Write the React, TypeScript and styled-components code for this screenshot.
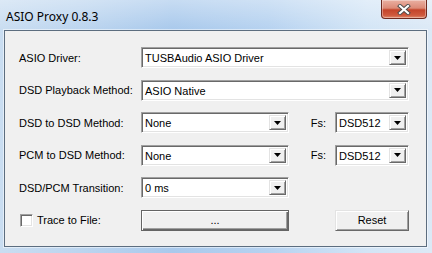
import React from "react";
import styled, { createGlobalStyle, css } from "styled-components";

const GlobalStyle = createGlobalStyle`
  html, body {
    margin: 0;
    padding: 0;
    background: #b9d3ee;
  }
  body {
    font-family: "Liberation Sans", Arial, sans-serif;
  }
`;

/* Classic Win32 3D edges */
const sunken = css`
  border: 1px solid;
  border-color: #a0a0a0 #ffffff #ffffff #a0a0a0;
  box-shadow: inset 1px 1px 0 #696969, inset -1px -1px 0 #e3e3e3;
`;

const raised = css`
  border: 1px solid;
  border-color: #e3e3e3 #696969 #696969 #e3e3e3;
  box-shadow: inset 1px 1px 0 #ffffff, inset -1px -1px 0 #a0a0a0;
`;

const Window = styled.div`
  width: 432px;
  height: 253px;
  box-sizing: border-box;
  display: flex;
  flex-direction: column;
  padding: 0 5px 6px 4px;
  overflow: hidden;
  background:
    linear-gradient(180deg, rgba(255, 255, 255, 0.35) 0, rgba(255, 255, 255, 0) 30px),
    linear-gradient(90deg, #c9ddf1 0%, #bcd5ef 18%, #a9c9ec 40%, #b6d2f0 62%, #d3e5f6 85%, #dce9f6 100%);
`;

const TitleBar = styled.div`
  height: 30px;
  display: flex;
  justify-content: space-between;
  align-items: flex-start;
`;

const Title = styled.div`
  padding: 8px 0 0 2px;
  font-family: "Segoe UI", "Noto Sans", sans-serif;
  font-size: 12px;
  color: #000;
`;

const CloseButton = styled.div`
  width: 46px;
  height: 19px;
  box-sizing: border-box;
  display: flex;
  align-items: center;
  justify-content: center;
  border: 1px solid #6e2a20;
  border-top: none;
  border-radius: 0 0 4px 4px;
  background: linear-gradient(180deg, #eab0a2 0%, #dc8a77 45%, #c4442a 55%, #cf5a3e 85%, #e08a6c 100%);
  box-shadow: inset 0 0 0 1px rgba(255, 255, 255, 0.35);
`;

const Client = styled.div`
  flex: 1;
  box-sizing: border-box;
  border: 1px solid #5c6d7f;
  box-shadow: 0 0 0 1px rgba(255, 255, 255, 0.5);
  background: #f0f0f0;
  padding: 16px 0 0 14px;
`;

const Form = styled.div`
  display: grid;
  grid-template-columns: 122px 148px 46px 74px;
  grid-template-rows: repeat(6, 21px);
  row-gap: 11.5px;
  align-items: center;
  font-size: 11px;
  color: #000;
`;

const Label = styled.div<{ $right?: boolean }>`
  white-space: nowrap;
  ${(p) => p.$right && "text-align: right; padding-right: 9px;"}
`;

const ComboBox = styled.div<{ $wide?: boolean }>`
  ${(p) => p.$wide && "grid-column: 2 / -1;"}
  height: 21px;
  box-sizing: border-box;
  display: flex;
  background: #fff;
  ${sunken}
  padding: 2px;
`;

const ComboText = styled.div`
  flex: 1;
  padding-left: 1px;
  line-height: 17px;
  white-space: nowrap;
  overflow: hidden;
`;

const DropButton = styled.div`
  width: 17px;
  box-sizing: border-box;
  display: flex;
  align-items: center;
  justify-content: center;
  background: #f0f0f0;
  ${raised}
`;

const PushButton = styled.div<{ $default?: boolean }>`
  height: 21px;
  box-sizing: border-box;
  display: flex;
  align-items: center;
  justify-content: center;
  background: #f0f0f0;
  ${raised}
  ${(p) =>
    p.$default &&
    css`
      border: 1px solid #646464;
      box-shadow: inset 1px 1px 0 #ffffff, inset -1px -1px 0 #696969, inset -2px -2px 0 #a0a0a0;
    `}
`;

const CheckRow = styled.label`
  display: flex;
  align-items: center;
  gap: 4px;
  padding-left: 1px;
  white-space: nowrap;
`;

const CheckBox = styled.span`
  width: 13px;
  height: 13px;
  box-sizing: border-box;
  background: #fff;
  ${sunken}
`;

const Arrow = () => (
  <svg width="7" height="4" viewBox="0 0 7 4">
    <polygon points="0,0 7,0 3.5,4" fill="#000" />
  </svg>
);

const CloseGlyph = () => (
  <svg width="14" height="11" viewBox="0 0 14 11">
    <path d="M3 2 L11 9 M11 2 L3 9" stroke="#4a4a4a" strokeWidth="4" strokeLinecap="square" />
    <path d="M3 2 L11 9 M11 2 L3 9" stroke="#ffffff" strokeWidth="2.2" strokeLinecap="square" />
  </svg>
);

const Combo = ({ value, wide }: { value: string; wide?: boolean }) => (
  <ComboBox $wide={wide}>
    <ComboText>{value}</ComboText>
    <DropButton>
      <Arrow />
    </DropButton>
  </ComboBox>
);

const Spacer = styled.div`
  grid-column: span 2;
`;

export default function App() {
  return (
    <>
      <GlobalStyle />
      <Window>
        <TitleBar>
          <Title>ASIO Proxy 0.8.3</Title>
          <CloseButton>
            <CloseGlyph />
          </CloseButton>
        </TitleBar>
        <Client>
          <Form>
            <Label>ASIO Driver:</Label>
            <Combo value="TUSBAudio ASIO Driver" wide />

            <Label>DSD Playback Method:</Label>
            <Combo value="ASIO Native" wide />

            <Label>DSD to DSD Method:</Label>
            <Combo value="None" />
            <Label $right>Fs:</Label>
            <Combo value="DSD512" />

            <Label>PCM to DSD Method:</Label>
            <Combo value="None" />
            <Label $right>Fs:</Label>
            <Combo value="DSD512" />

            <Label>DSD/PCM Transition:</Label>
            <Combo value="0 ms" />
            <Spacer />

            <CheckRow>
              <CheckBox />
              Trace to File:
            </CheckRow>
            <PushButton $default>...</PushButton>
            <div />
            <PushButton>Reset</PushButton>
          </Form>
        </Client>
      </Window>
    </>
  );
}
